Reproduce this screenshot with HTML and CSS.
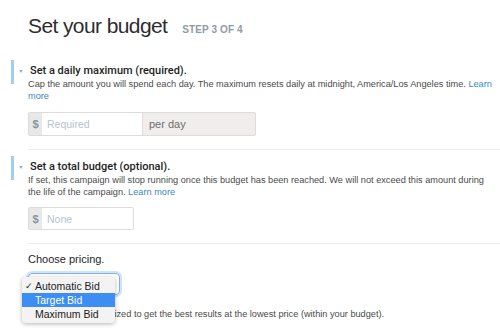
FILE: index.html
```html
<!DOCTYPE html>
<html lang="en">
<head>
    <meta charset="UTF-8">
    <title>Set your budget</title>
    <link rel="stylesheet" href="styles.css">
</head>
<body>
    <div class="page">
        <div class="page-header">
            <h1>Set your budget</h1>
            <span class="step">STEP 3 OF 4</span>
        </div>

        <div class="section">
            <div class="section-head">
                <h2>Set a daily maximum (required).</h2>
                <p class="hint">Cap the amount you will spend each day. The maximum resets daily at midnight, America/Los Angeles time. <a href="#">Learn more</a></p>
            </div>
            <div class="input-group daily">
                <span class="addon">$</span>
                <input type="text" class="field" placeholder="Required">
                <span class="addon suffix">per day</span>
            </div>
        </div>

        <div class="section">
            <div class="section-head">
                <h2>Set a total budget (optional).</h2>
                <p class="hint">If set, this campaign will stop running once this budget has been reached. We will not exceed this amount during the life of the campaign. <a href="#">Learn more</a></p>
            </div>
            <div class="input-group total">
                <span class="addon">$</span>
                <input type="text" class="field" placeholder="None">
            </div>
        </div>

        <div class="section pricing">
            <h3>Choose pricing.</h3>
            <div class="select-wrap">
                <div class="select"><span class="arrows"></span></div>
                <ul class="menu">
                    <li class="checked">Automatic Bid</li>
                    <li class="hover">Target Bid</li>
                    <li>Maximum Bid</li>
                </ul>
            </div>
            <p class="hint">Your bid will be optimized to get the best results at the lowest price (within your budget).</p>
        </div>
    </div>
</body>
</html>
```

FILE: styles.css
```css
* {
    margin: 0;
    padding: 0;
    box-sizing: border-box;
}

body {
    font-family: "Liberation Sans", Helvetica, Arial, sans-serif;
    background: #fff;
    color: #333;
}

.page {
    padding: 13px 3px 0 28px;
}

.page-header {
    display: flex;
    align-items: baseline;
    gap: 15px;
}

.page-header h1 {
    font-size: 21px;
    line-height: 26px;
    font-weight: normal;
    color: #2e2e2e;
    letter-spacing: -0.6px;
}

.step {
    font-size: 10px;
    font-weight: bold;
    color: #8d9ba6;
    letter-spacing: 0.1px;
}

.section {
    border-bottom: 1px solid #ededed;
    padding-bottom: 13px;
    margin-right: -3px;
    padding-right: 3px;
}

.section-head {
    padding-top: 24px;
}

.section + .section .section-head {
    padding-top: 9px;
}

.section-head h2 {
    position: relative;
    font-family: Roboto, "Liberation Sans", Arial, sans-serif;
    font-size: 11px;
    line-height: 15px;
    font-weight: 500;
    color: #1e1e1e;
    padding-left: 2px;
}

/* blue marker bar */
.section-head h2::after {
    content: "";
    position: absolute;
    left: -17px;
    top: -3px;
    width: 3px;
    height: 24px;
    background: #a3cef0;
}

/* collapse caret */
.section-head h2::before {
    content: "";
    position: absolute;
    left: -9px;
    top: 7px;
    border-left: 2.5px solid transparent;
    border-right: 2.5px solid transparent;
    border-top: 3px solid #8fb3d1;
}

.hint {
    font-size: 9.2px;
    line-height: 12px;
    color: #4a4a4a;
}

.hint a {
    color: #3b87c6;
    text-decoration: none;
}

.input-group {
    display: flex;
    height: 24px;
    margin-top: 10px;
    border: 1px solid #dcdcdc;
    border-radius: 2px;
    font-size: 11px;
}

.input-group.daily {
    width: 228px;
}

.input-group.total {
    width: 106px;
    height: 23px;
    margin-top: 9px;
}

.addon {
    display: flex;
    align-items: center;
    justify-content: center;
    width: 13px;
    background: #e8e8e8;
    color: #8a949c;
    font-weight: bold;
}

.addon.suffix {
    flex: 1;
    justify-content: flex-start;
    padding-left: 6px;
    background: #f2eded;
    color: #6e6e6e;
    font-weight: normal;
    border-left: 1px solid #e2dcdc;
}

.field {
    width: 100px;
    border: none;
    outline: none;
    padding-left: 5px;
    font-family: inherit;
    font-size: 10.5px;
    color: #333;
}

.input-group.total .field {
    flex: 1;
    width: auto;
    min-width: 0;
}

.field::placeholder {
    color: #b6c3ce;
}

.pricing {
    border-bottom: none;
}

.pricing h3 {
    font-size: 11px;
    line-height: 15px;
    font-weight: normal;
    color: #1e1e1e;
    margin-top: 8px;
}

.select-wrap {
    position: relative;
    margin-top: 6px;
}

.select {
    position: relative;
    width: 92px;
    height: 22px;
    border: 1px solid #7cb0e6;
    border-radius: 4px;
    box-shadow: 0 0 0 2px rgba(124, 176, 230, 0.35);
}

.arrows {
    position: absolute;
    right: 4px;
    top: 6px;
    width: 4px;
    height: 8px;
    border-top: 2px solid #c9c9c9;
    border-bottom: 2px solid #c9c9c9;
}

.menu {
    position: absolute;
    left: -6px;
    top: 4px;
    width: 93px;
    padding: 2px 0;
    list-style: none;
    background: #f3f3f3;
    border-radius: 4px;
    box-shadow: 0 1px 4px rgba(0, 0, 0, 0.3);
    font-size: 10.5px;
    color: #222;
}

.menu li {
    height: 14px;
    line-height: 14px;
    padding-left: 13px;
    position: relative;
}

.menu li.checked::before {
    content: "\2713";
    position: absolute;
    left: 3px;
    font-size: 9px;
}

.menu li.hover {
    background: #3d8ef2;
    color: #fff;
}

.pricing .hint {
    margin-top: 13px;
}
```
